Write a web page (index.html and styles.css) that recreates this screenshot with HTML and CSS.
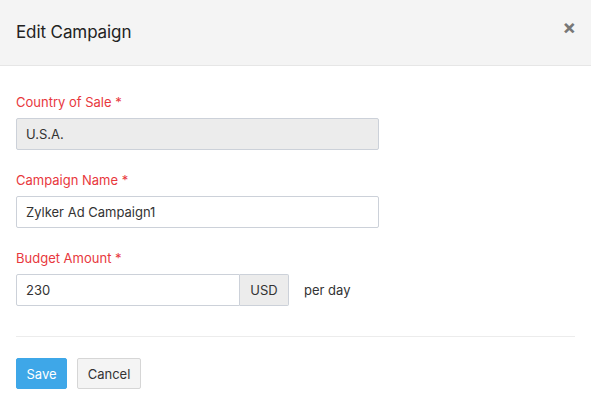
FILE: index.html
```html
<!DOCTYPE html>
<html>
<head>
<meta charset="utf-8">
<link rel="stylesheet" href="styles.css">
</head>
<body>
<div class="modal">
  <div class="modal-header">
    <h4 class="title">Edit Campaign</h4>
    <span class="close">&times;</span>
  </div>
  <div class="modal-body">
    <div class="field">
      <label class="label">Country of Sale *</label>
      <div class="input disabled">U.S.A.</div>
    </div>
    <div class="field">
      <label class="label">Campaign Name *</label>
      <div class="input">Zylker Ad Campaign1</div>
    </div>
    <div class="field">
      <label class="label">Budget Amount *</label>
      <div class="row">
        <div class="group">
          <div class="input grp-input">230</div>
          <div class="addon">USD</div>
        </div>
        <span class="suffix">per day</span>
      </div>
    </div>
  </div>
  <div class="modal-footer">
    <button class="btn btn-primary">Save</button>
    <button class="btn btn-default">Cancel</button>
  </div>
</div>
</body>
</html>
```
FILE: styles.css
```css
* { box-sizing: border-box; }
html, body { margin: 0; padding: 0; background: #fff; }
body { font-family: Inter, "Liberation Sans", sans-serif; color: #333; font-size: 13px; }
.modal { width: 591px; }
.modal-header {
  height: 66px;
  background: #f4f4f4;
  border-bottom: 1px solid #e6e6e6;
  display: flex;
  align-items: center;
  justify-content: space-between;
  padding: 0 16px 2px 16px;
}
.title { margin: 0; font-size: 17px; font-weight: 400; color: #222; letter-spacing: -0.1px; }
.close { color: #777; font-size: 20px; font-weight: 700; line-height: 1; margin-top: -9px; margin-right: -1px; }
.modal-body {
  margin: 0 16px;
  padding: 27px 0 30px 0;
  border-bottom: 1px solid #ececec;
}
.field { margin-bottom: 21px; }
.field:last-child { margin-bottom: 0; }
.label { display: block; color: #e8383d; font-size: 13px; margin-bottom: 7px; line-height: 18px; }
.input {
  width: 363px;
  height: 32px;
  border: 1px solid #ccd1d9;
  border-radius: 2px;
  padding: 0 9px;
  display: flex;
  align-items: center;
  font-size: 13px;
  color: #333;
  background: #fff;
}
.input.disabled { background: #ececec; }
.row { display: flex; align-items: center; }
.group { display: flex; }
.grp-input { width: 224px; border-radius: 2px 0 0 2px; }
.addon {
  width: 49px; height: 32px;
  background: #ececec;
  border: 1px solid #ccd1d9;
  border-left: none;
  border-radius: 0 2px 2px 0;
  display: flex; align-items: center; justify-content: center;
  font-size: 13px; color: #333;
}
.suffix { margin-left: 15px; font-size: 13px; color: #333; }
.modal-footer { padding: 21px 16px 20px 16px; display: flex; gap: 10px; }
.btn {
  height: 31px;
  border-radius: 2px;
  font-family: inherit;
  font-size: 13px;
  padding: 0;
  cursor: pointer;
}
.btn-primary { background: #3ea7e8; color: #fff; border: 1px solid #3ea7e8; width: 51px; }
.btn-default { background: #f4f4f4; color: #333; border: 1px solid #d6d6d6; width: 64px; }
```
